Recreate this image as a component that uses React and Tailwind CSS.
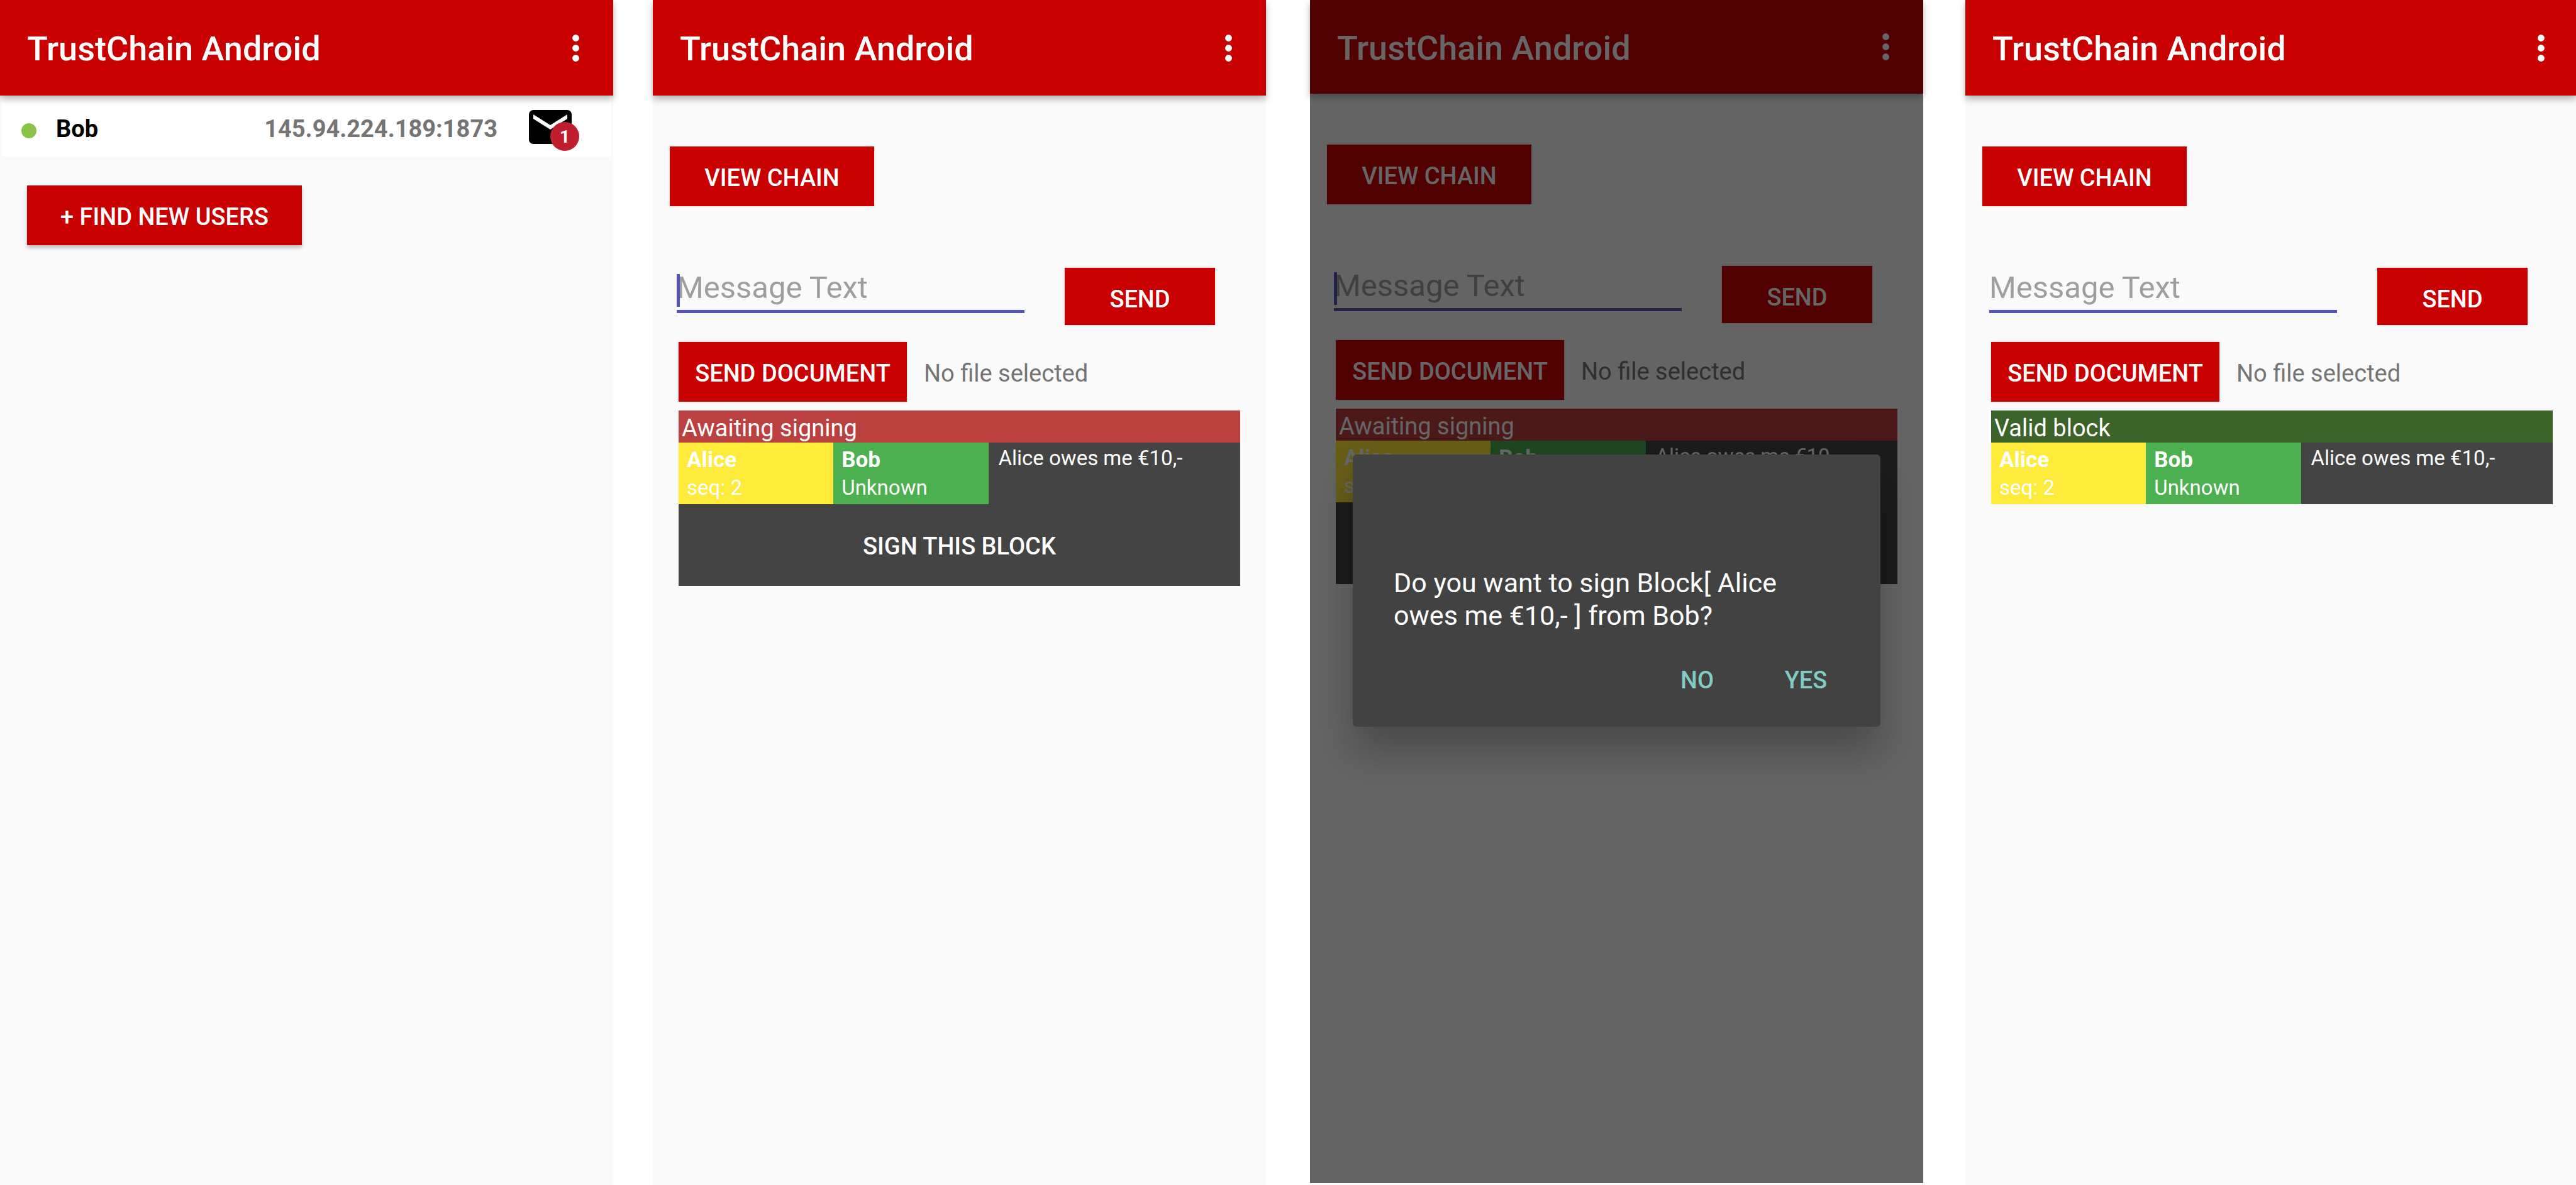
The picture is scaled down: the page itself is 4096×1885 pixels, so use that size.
const solidButton =
  "flex items-center justify-center bg-[#c90000] text-[38px] leading-[44px] font-medium text-white uppercase whitespace-nowrap";

function AppBar({ heightClass = "h-[152px]", endClass = "pr-[38px]" }) {
  return (
    <header
      className={`relative flex shrink-0 items-center justify-between bg-[#c90000] pl-[43px] text-white shadow-[0_6px_10px_rgba(0,0,0,0.28)] ${heightClass} ${endClass}`}
    >
      <h1 className="pt-1 text-[54px] leading-[64px] font-medium">TrustChain Android</h1>
      <button type="button" aria-label="More options" className="flex w-11 justify-center">
        <svg viewBox="0 0 11 43" className="h-[43px] w-[11px]" fill="currentColor" aria-hidden="true">
          <circle cx="5.5" cy="5.5" r="5.4" />
          <circle cx="5.5" cy="21.5" r="5.4" />
          <circle cx="5.5" cy="37.5" r="5.4" />
        </svg>
      </button>
    </header>
  );
}

function InboxIcon() {
  return (
    <button type="button" aria-label="Inbox, 1 new message" className="relative h-[54px] w-[68px]">
      <svg viewBox="0 0 68 54" className="h-full w-full" aria-hidden="true">
        <rect width="68" height="54" rx="7" fill="#000" />
        <path d="M7 7 L34 24 L61 7 V14 L34 31 L7 14 Z" fill="#fff" />
      </svg>
      <span className="absolute top-[19px] left-[34px] flex size-[46px] items-center justify-center rounded-full bg-[#bf1e2e] pt-[2px] text-[28px] leading-8 font-bold text-white">
        1
      </span>
    </button>
  );
}

function UsersScreen({ className }) {
  return (
    <section className={`flex flex-col bg-[#fafafa] ${className}`}>
      <AppBar />
      <div className="mx-[3px] flex h-[97px] items-center bg-white pt-[2px] pr-[63px] pl-[31px] text-[38px] leading-[44px] font-bold">
        <span className="mt-3 size-6 rounded-full bg-[#8bc34a]" />
        <span className="mt-[6px] ml-[31px] text-black">Bob</span>
        <span className="mt-[6px] mr-[50px] ml-auto text-[#757575]">145.94.224.189:1873</span>
        <InboxIcon />
      </div>
      <button
        type="button"
        className={`mt-[46px] ml-[43px] h-[95px] w-[437px] pt-1 shadow-[0_4px_6px_rgba(0,0,0,0.25)] ${solidButton}`}
      >
        + Find new users
      </button>
    </section>
  );
}

function Block({ status, statusClass, canSign }) {
  return (
    <article className="mt-[14px] bg-[#444444] text-[33px] leading-[39px] text-white">
      <h2 className={`px-[5px] pt-[6px] text-[38px] leading-[45px] ${statusClass}`}>{status}</h2>
      <div className="grid grid-cols-[273fr_273fr_444fr]">
        <div className="h-[98px] bg-[#ffeb3b] px-[13px] pt-1">
          <p className="text-[35px] leading-[48px] font-bold">Alice</p>
          <p>seq: 2</p>
        </div>
        <div className="h-[98px] bg-[#4caf50] px-[13px] pt-1">
          <p className="text-[35px] leading-[48px] font-bold">Bob</p>
          <p>Unknown</p>
        </div>
        <p className="px-4 pt-[5px]">Alice owes me €10,-</p>
      </div>
      {canSign && (
        <button type="button" className="h-[130px] w-full pt-1 text-[38px] leading-[44px] font-medium uppercase">
          Sign this block
        </button>
      )}
    </article>
  );
}

function ChatScreen({ id, className, barHeight, barEnd, endPad = "pr-[41px]", caret, children, ...block }) {
  return (
    <section className={`relative flex flex-col bg-[#fafafa] ${className}`}>
      <AppBar heightClass={barHeight} endClass={barEnd} />
      <div className={`flex flex-col pl-[41px] ${endPad}`}>
        <button
          type="button"
          className={`mt-[81px] -ml-[14px] h-[95px] w-[325px] pt-1 shadow-[0_0_4px_rgba(0,0,0,0.12)] ${solidButton}`}
        >
          View chain
        </button>
        <div className="mt-[98px] -ml-[3px] flex items-start">
          <div className="relative w-[553px]">
            <input
              id={id}
              type="text"
              aria-label="Message Text"
              placeholder="Message Text"
              className="mt-[3px] h-[69px] w-full border-b-[5px] border-[#5555bb] pb-[7px] text-[49px] leading-[57px] text-black outline-none placeholder:text-[#9e9e9e]"
            />
            {caret && <span className="absolute top-[10px] left-0 h-[52px] w-[5px] bg-[#5555bb]" />}
          </div>
          <button
            type="button"
            className={`ml-[64px] h-[91px] w-[239px] pt-2 shadow-[0_0_4px_rgba(0,0,0,0.2)] ${solidButton}`}
          >
            Send
          </button>
        </div>
        <div className="mt-[27px] flex items-center">
          <button
            type="button"
            className={`h-[95px] w-[363px] pt-1 shadow-[0_0_4px_rgba(0,0,0,0.2)] ${solidButton}`}
          >
            Send document
          </button>
          <span className="ml-[27px] pt-1 text-[38px] leading-[44px] text-[#757575]">No file selected</span>
        </div>
        <Block {...block} />
      </div>
      {children}
    </section>
  );
}

function SignDialog() {
  return (
    <div className="absolute inset-0 bg-black/60 px-[68px] pt-[723px]">
      <div
        role="dialog"
        aria-modal="true"
        aria-label="Sign block"
        className="rounded-[6px] bg-[#424242] px-8 pt-[178px] pb-[9px] shadow-[0_40px_60px_rgba(0,0,0,0.25)]"
      >
        <p className="px-[33px] text-[43px] leading-[52px] text-white">
          Do you want to sign Block[ Alice
          <br />
          owes me €10,- ] from Bob?
        </p>
        <div className="mt-3 flex justify-end text-[38px] leading-[44px] font-medium text-[#80cbc4]">
          <button type="button" className="h-[130px] w-[173px] uppercase">
            No
          </button>
          <button type="button" className="h-[130px] w-[173px] uppercase">
            Yes
          </button>
        </div>
      </div>
    </div>
  );
}

export default function App() {
  return (
    <main className="grid min-h-screen grid-cols-[975fr_63fr_975fr_70fr_975fr_67fr_971fr] overflow-hidden bg-white font-['Roboto',sans-serif]">
      <UsersScreen className="col-start-1" />
      <ChatScreen
        id="message-pending"
        className="col-start-3"
        caret
        status="Awaiting signing"
        statusClass="bg-[#bb4040]"
        canSign
      />
      <ChatScreen
        id="message-dialog"
        className="col-start-5 mb-[3px]"
        barHeight="h-[149px]"
        caret
        status="Awaiting signing"
        statusClass="bg-[#bb4040]"
        canSign
      >
        <SignDialog />
      </ChatScreen>
      <ChatScreen
        id="message-valid"
        className="col-start-7"
        barEnd="pr-[34px]"
        endPad="pr-[37px]"
        status="Valid block"
        statusClass="bg-[#3b632a]"
      />
    </main>
  );
}
